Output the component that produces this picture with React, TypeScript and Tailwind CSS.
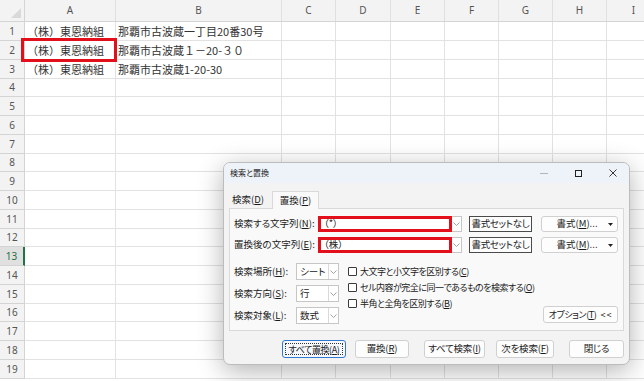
const COLS = [
  { k: "A", w: "w-[91px]" },
  { k: "B", w: "w-[166px]" },
  { k: "C", w: "w-[54px]" },
  { k: "D", w: "w-[55px]" },
  { k: "E", w: "w-[54px]" },
  { k: "F", w: "w-[54px]" },
  { k: "G", w: "w-[54px]" },
  { k: "H", w: "w-[54px]" },
  { k: "I", w: "w-[54px]" },
];

const DATA: Record<number, string[]> = {
  1: ["（株）東恩納組", "那覇市古波蔵一丁目20番30号"],
  2: ["（株）東恩納組", "那覇市古波蔵１－20-３０"],
  3: ["（株）東恩納組", "那覇市古波蔵1-20-30"],
};

const ROWS = Array.from({ length: 19 }, (_, i) => i + 1);

function Acc({ k }: { k: string }) {
  return (
    <>
      (<span className="underline underline-offset-[1px]">{k}</span>)
    </>
  );
}

function Chevron() {
  return (
    <svg width="7" height="4" viewBox="0 0 7 4">
      <path d="M0.5 0.5L3.5 3.5L6.5 0.5" fill="none" stroke="#8a8a8a" strokeWidth="0.8" />
    </svg>
  );
}

function Caret() {
  return (
    <svg width="5" height="3" viewBox="0 0 5 3">
      <polygon points="0,0 5,0 2.5,3" fill="#222" />
    </svg>
  );
}

function Combo({ text }: { text: string }) {
  return (
    <div className="relative w-[144px] h-[16px] border border-[#c6c6c6] bg-white flex">
      <div className="flex-1 flex items-center pl-[5px]">{text}</div>
      <div className="w-[10px] border-l border-[#dadada] flex items-center justify-center">
        <Chevron />
      </div>
      {/* annotation */}
      <div className="absolute left-[-1px] top-[-1px] w-[134px] h-[16px] border-[3px] border-[#e3101b]" />
    </div>
  );
}

function Select({ text }: { text: string }) {
  return (
    <div className="w-[43px] h-[17px] border border-[#c6c6c6] bg-white flex">
      <div className="w-[31px] flex items-center pl-[3px]">{text}</div>
      <div className="flex-1 border-l border-[#dadada] flex items-center justify-center">
        <Chevron />
      </div>
    </div>
  );
}

function Check({ children }: { children: React.ReactNode }) {
  return (
    <div className="h-[16px] flex items-center whitespace-nowrap">
      <span className="w-[9px] h-[9px] border border-[#3a3a3a] rounded-[1px] bg-white shrink-0" />
      <span className="ml-[3px] text-[9px] tracking-[-0.5px]">{children}</span>
    </div>
  );
}

const BTN = "h-[18px] border border-[#d0d0d0] rounded-[3px] bg-[#fdfdfd] flex items-center justify-center whitespace-nowrap";

function FormatRow({ label, k, text }: { label: string; k: string; text: string }) {
  return (
    <div className="flex items-center h-[16px]">
      <div className="w-[84px]">
        {label}
        <Acc k={k} />:
      </div>
      <Combo text={text} />
      <div className="ml-[7px] w-[63px] h-[16px] border border-[#4a4a4a] bg-[#fdfdfd] flex items-center justify-center tracking-[-0.3px]">
        書式セットなし
      </div>
      <div className="ml-[9px] w-[77px] h-[16px] border border-[#d0d0d0] rounded-[3px] bg-[#fdfdfd] flex items-center">
        <span className="flex-1 text-center pl-[4px]">
          書式<Acc k="M" />...
        </span>
        <span className="mr-[4px] flex items-center">
          <Caret />
        </span>
      </div>
    </div>
  );
}

function Dialog() {
  return (
    <div className="absolute left-[223px] top-[162px] w-[407px] h-[203px] rounded-[7px] border border-[#bcbcbc] bg-[#f3f3f3] shadow-[0_6px_26px_rgba(0,0,0,0.3)] overflow-hidden flex flex-col text-[9.5px] leading-none text-[#1a1a1a] [font-feature-settings:'palt']">
      {/* title bar */}
      <div className="h-[20px] bg-[#eef3f9] flex items-center pl-[6px] shrink-0">
        <span className="text-[8px]">検索と置換</span>
        <div className="ml-auto flex items-center">
          <span className="w-[8px] h-px bg-[#b5b5b5]" />
          <span className="ml-[27px] w-[7px] h-[7px] border border-[#222]" />
          <svg className="ml-[27px] mr-[12px]" width="8" height="8" viewBox="0 0 8 8">
            <path d="M0.5 0.5L7.5 7.5M7.5 0.5L0.5 7.5" stroke="#222" strokeWidth="0.9" />
          </svg>
        </div>
      </div>

      <div className="flex-1 px-[5px] flex flex-col">
        {/* tabs */}
        <div className="h-[25px] flex items-end pl-[3px] shrink-0">
          <div className="w-[40px] h-[16px] flex items-center">
            検索<Acc k="D" />
          </div>
          <div className="relative z-10 -mb-px w-[47px] h-[18px] border border-b-0 border-[#d9d9d9] bg-[#f9f9f9] flex items-center justify-center">
            置換<Acc k="P" />
          </div>
        </div>

        {/* panel */}
        <div className="h-[123px] w-[395px] border border-[#d9d9d9] bg-[#f9f9f9] pt-[7px] pl-[4px] shrink-0">
          <FormatRow label="検索する文字列" k="N" text="（*）" />
          <div className="mt-[5px]">
            <FormatRow label="置換後の文字列" k="E" text="（株）" />
          </div>

          <div className="flex mt-[10px] h-[61px]">
            <div className="flex flex-col gap-[5px]">
              <div className="flex items-center h-[17px]">
                <div className="w-[62px]">
                  検索場所<Acc k="H" />:
                </div>
                <Select text="シート" />
              </div>
              <div className="flex items-center h-[17px]">
                <div className="w-[62px]">
                  検索方向<Acc k="S" />:
                </div>
                <Select text="行" />
              </div>
              <div className="flex items-center h-[17px]">
                <div className="w-[62px]">
                  検索対象<Acc k="L" />:
                </div>
                <Select text="数式" />
              </div>
            </div>
            <div className="ml-[9px] flex flex-col">
              <Check>
                大文字と小文字を区別する<Acc k="C" />
              </Check>
              <Check>
                セル内容が完全に同一であるものを検索する<Acc k="O" />
              </Check>
              <Check>
                半角と全角を区別する<Acc k="B" />
              </Check>
            </div>
            <div className="ml-auto self-end mr-[5px] mb-[1px]">
              <div className="w-[75px] h-[17px] border border-[#d0d0d0] rounded-[3px] bg-[#fdfdfd] flex items-center justify-center whitespace-nowrap text-[9px] tracking-[-0.4px]">
                オプション<Acc k="T" />
                <span className="ml-[4px] tracking-[1px]">&lt;&lt;</span>
              </div>
            </div>
          </div>
        </div>

        {/* bottom buttons */}
        <div className="flex mt-[9px] pl-[53px] tracking-[-0.2px]">
          <div className="relative w-[64px] h-[18px] border border-[#2f7ad0] rounded-[3px] bg-[#f5f8fc] flex items-center justify-center whitespace-nowrap text-[9px] tracking-[-0.4px]">
            <span className="absolute inset-[2px] border border-dotted border-[#333]" />
            すべて置換<Acc k="A" />
          </div>
          <div className={`ml-[9px] w-[54px] ${BTN}`}>
            置換<Acc k="R" />
          </div>
          <div className={`ml-[15px] w-[61px] ${BTN}`}>
            すべて検索<Acc k="I" />
          </div>
          <div className={`ml-[11px] w-[58px] ${BTN}`}>
            次を検索<Acc k="F" />
          </div>
          <div className={`ml-[15px] w-[55px] ${BTN}`}>閉じる</div>
        </div>
      </div>
    </div>
  );
}

export default function App() {
  return (
    <div className="relative w-[644px] h-[381px] overflow-hidden bg-white font-['Noto_Sans_CJK_JP',sans-serif]">
      {/* column header */}
      <div className="flex h-[22px] bg-[#f3f3f3] border-b border-[#d4d4d4]">
        <div className="relative w-[25px] shrink-0 border-r border-[#d4d4d4]">
          <svg className="absolute right-[3px] bottom-[3px]" width="10" height="10" viewBox="0 0 10 10">
            <polygon points="10,0 10,10 0,10" fill="#d9d9d9" />
          </svg>
        </div>
        {COLS.map((c) => (
          <div
            key={c.k}
            className={`${c.w} shrink-0 border-r border-[#e0e0e0] flex items-center justify-center text-[10px] text-[#555] font-['Noto_Sans',sans-serif]`}
          >
            {c.k}
          </div>
        ))}
      </div>

      {/* rows */}
      {ROWS.map((r) => {
        const sel = r === 13;
        return (
          <div key={r} className={`flex ${r % 4 === 0 ? "h-[18px]" : "h-[19px]"}`}>
            <div
              className={`w-[25px] shrink-0 border-b flex items-center justify-center text-[10px] font-['Noto_Sans',sans-serif] ${
                sel
                  ? "bg-[#e0e0e0] text-[#217346] border-r-2 border-r-[#217346] border-b-[#d4d4d4]"
                  : "bg-[#f3f3f3] text-[#555] border-r border-[#d4d4d4]"
              }`}
            >
              {r}
            </div>
            {COLS.map((c, i) => (
              <div
                key={c.k}
                className={`${c.w} shrink-0 border-r border-b border-[#e2e2e2] flex items-center pl-[2px] text-[11px] text-[#333] whitespace-nowrap`}
              >
                {DATA[r]?.[i] ?? ""}
              </div>
            ))}
          </div>
        );
      })}

      {/* annotation around A2 */}
      <div className="absolute left-[21px] top-[38px] w-[96px] h-[24px] border-[3px] border-[#e3101b]" />

      <Dialog />
    </div>
  );
}
